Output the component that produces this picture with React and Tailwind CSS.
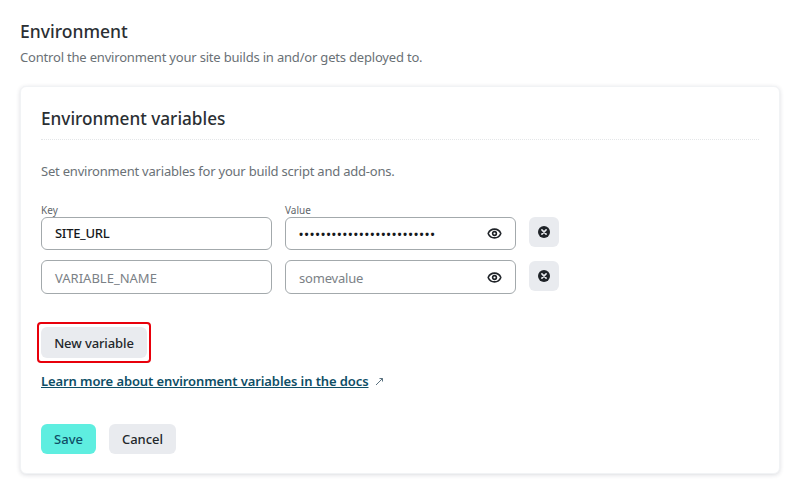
import { Eye } from 'lucide-react';

const XCircle = () => (
  <svg className="w-3.5 h-3.5" viewBox="0 0 14 14">
    <circle cx="7" cy="7" r="6" fill="#1f2328" />
    <path d="M4.9 4.9l4.2 4.2M9.1 4.9l-4.2 4.2" stroke="#e9ebef" strokeWidth="1.6" strokeLinecap="round" />
  </svg>
);

const Field = ({ children, eye, tall }) => (
  <div className={`w-[231px] ${tall ? 'h-[34px]' : 'h-[33px]'} border border-[#a3a9ac] rounded-md bg-white flex items-center justify-between pl-[13px] pr-[13px]`}>
    <div className={`text-[13px] leading-none ${tall ? 'pt-[2px]' : ''}`}>{children}</div>
    {eye && <Eye className="w-[15px] h-[15px] text-[#1f2328]" strokeWidth={2.6} />}
  </div>
);

const RemoveBtn = () => (
  <button className="w-[30px] h-[30px] rounded-md bg-[#e9ebef] flex items-center justify-center pb-[1px]">
    <XCircle />
  </button>
);

export default function App() {
  return (
    <div className="w-[800px] h-[491px] bg-white overflow-hidden px-5 pt-[21px] font-['Noto_Sans','Open_Sans',sans-serif] text-[#2d3436]">
      <h1 className="text-[17.5px] leading-[20px] font-medium text-[#2b2f33]">Environment</h1>
      <p className="mt-[6px] text-[13px] tracking-[-0.19px] leading-[20px] text-[#6a7176]">Control the environment your site builds in and/or gets deployed to.</p>

      <div className="mt-[19px] w-[760px] h-[388px] rounded-md bg-white border border-[#f1f3f5] shadow-[0_1px_4px_rgba(30,40,60,0.16)] px-5 pt-[21px]">
        <h2 className="text-[17.2px] leading-[22px] font-medium text-[#2b2f33] pb-[9px] border-b border-dotted border-[#e4e6e8]">Environment variables</h2>
        <p className="mt-[21px] text-[13px] tracking-[-0.21px] leading-[20px] text-[#6a7176]">Set environment variables for your build script and add-ons.</p>

        <div className="mt-[22px] flex gap-[13px]">
          <div className="flex flex-col">
            <label className="text-[10px] leading-[14px] text-[#5f666b]">Key</label>
            <Field><span className="font-medium text-[#15181b] tracking-[-0.3px]">SITE_URL</span></Field>
            <div className="mt-[10px]">
              <Field tall><span className="text-[#7b8186]">VARIABLE_NAME</span></Field>
            </div>
          </div>
          <div className="flex flex-col">
            <label className="text-[10px] leading-[14px] text-[#5f666b]">Value</label>
            <Field eye><span className="text-[#15181b] text-[11px] tracking-[1.34px] font-bold">•••••••••••••••••••••••••</span></Field>
            <div className="mt-[10px]">
              <Field eye tall><span className="text-[#7b8186] tracking-[-0.2px]">somevalue</span></Field>
            </div>
          </div>
          <div className="flex flex-col pt-[14px] gap-[14px]">
            <RemoveBtn />
            <RemoveBtn />
          </div>
        </div>

        <div className="mt-[28px] w-[114px] h-[41px] -ml-1 border-2 border-[#e8000b] rounded-[4px] flex items-center pl-[2px]">
          <button className="w-[106px] h-[31px] pt-[2px] rounded-md bg-[#e9ebef] text-[13px] tracking-[-0.1px] font-medium text-[#23272b]">New variable</button>
        </div>

        <div className="mt-[8px] flex items-center gap-[6px]">
          <a className="text-[13px] tracking-[-0.1px] leading-[20px] font-semibold text-[#0e4e66] underline">Learn more about environment variables in the docs</a>
          <svg className="w-[9px] h-[9px]" viewBox="0 0 9 9" fill="none" stroke="#5b7280" strokeWidth="1">
            <path d="M1 8L7.5 1.5M4.5 1.5h3V4.5" />
          </svg>
        </div>

        <div className="mt-[33px] flex gap-[13px]">
          <button className="w-[55px] h-[30px] pt-[2px] rounded-md bg-[#5eeee0] text-[13px] font-medium text-[#0e4e66]">Save</button>
          <button className="w-[67px] h-[30px] pt-[2px] rounded-md bg-[#e9ebef] text-[13px] font-medium text-[#23272b]">Cancel</button>
        </div>
      </div>
    </div>
  );
}
